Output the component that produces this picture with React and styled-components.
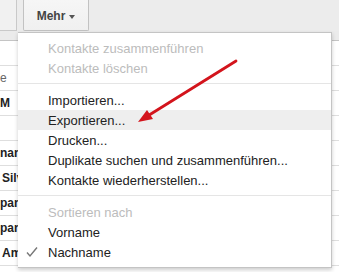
import React from 'react'
import styled, { createGlobalStyle } from 'styled-components'

const GlobalStyle = createGlobalStyle`
  html, body { margin: 0; padding: 0; background: #fff; }
  body { font-family: "Liberation Sans", Arial, sans-serif; }
`

const rows = [
  { text: '', bold: false },
  { text: 'e', bold: false },
  { text: 'M', bold: true },
  { text: '', bold: false },
  { text: 'nann', bold: true },
  { text: 'Silvia', bold: true, indent: true },
  { text: 'panagiotis', bold: true },
  { text: 'panagiotis', bold: true },
  { text: 'Amelie', bold: true, indent: true },
]

const menu = [
  { label: 'Kontakte zusammenführen', disabled: true },
  { label: 'Kontakte löschen', disabled: true },
  { sep: true },
  { label: 'Importieren...' },
  { label: 'Exportieren...', hover: true },
  { label: 'Drucken...' },
  { label: 'Duplikate suchen und zusammenführen...' },
  { label: 'Kontakte wiederherstellen...' },
  { sep: true },
  { label: 'Sortieren nach', disabled: true },
  { label: 'Vorname' },
  { label: 'Nachname', checked: true },
]

export default function App() {
  return (
    <>
      <GlobalStyle />
      <Page>
        <Toolbar>
          <SideButton />
          <MoreButton>
            Mehr
            <Caret />
          </MoreButton>
        </Toolbar>
        <HeaderBand />
        {rows.map((r, i) => (
          <Row key={i}>
            <Cell $bold={r.bold} $indent={r.indent}>{r.text}</Cell>
          </Row>
        ))}

        <Menu>
          {menu.map((m, i) =>
            m.sep ? (
              <Separator key={i} />
            ) : (
              <Item key={i} $disabled={m.disabled} $hover={m.hover}>
                <CheckSlot>
                  {m.checked && (
                    <svg width="12" height="12" viewBox="0 0 12 12">
                      <polyline points="1,6.5 4,10 11,1.5" fill="none" stroke="#777" strokeWidth="1.4" />
                    </svg>
                  )}
                </CheckSlot>
                {m.label}
              </Item>
            )
          )}
        </Menu>

        <Arrow width="339" height="272" viewBox="0 0 339 272">
          <line x1="236" y1="61" x2="146" y2="117" stroke="#d3141c" strokeWidth="2.8" strokeLinecap="round" />
          <polygon points="138,122 147,110 153,119" fill="#d3141c" />
        </Arrow>
      </Page>
    </>
  )
}

const Page = styled.div`
position:relative;
width:339px;
height:272px;
overflow:hidden;
background:#fff;
`

const Toolbar = styled.div`
display:flex;
gap:6px;
height:31px;
background:#ececec;
`

const SideButton = styled.div`
width:16px;
height:30px;
background:#f1f1f1;
border-right:1px solid #c9c9c9;
border-bottom:1px solid #c9c9c9;
`

const MoreButton = styled.div`
box-sizing:border-box;
width:66px;
height:31px;
display:flex;
align-items:center;
justify-content:center;
gap:4px;
padding-top:2px;
background:linear-gradient(#f6f6f6, #f0f0f0);
border:1px solid #c2c2c2;
border-top:none;
border-radius:0 0 2px 2px;
font-size:12px;
font-weight:bold;
color:#444;
`

const Caret = styled.span`
width:0;
height:0;
border-left:3.5px solid transparent;
border-right:3.5px solid transparent;
border-top:4px solid #555;
margin-top:1px;
`

const HeaderBand = styled.div`
height:9px;
background:#ebebeb;
border-bottom:1px solid #c4c4c4;
`

const Row = styled.div`
height:24px;
border-bottom:1px solid #dedede;
display:flex;
align-items:center;
`

const Cell = styled.span`
padding-left:${p => (p.$indent ? '2px' : '0')};
font-size:12px;
font-weight:${p => (p.$bold ? 'bold' : 'normal')};
color:${p => (p.$bold ? '#222' : '#666')};
white-space:nowrap;
`

const Menu = styled.div`
position:absolute;
left:18px;
top:32px;
width:314px;
height:236px;
box-sizing:border-box;
padding:5px 0 7px;
background:#fff;
border:1px solid #c4c4c4;
border-left:none;
box-shadow:0 2px 4px rgba(0,0,0,0.2);
`

const Item = styled.div`
height:20px;
display:flex;
align-items:center;
padding-left:8px;
font-size:13px;
color:${p => (p.$disabled ? '#bcbcbc' : '#222')};
background:${p => (p.$hover ? '#eeeeee' : 'transparent')};
white-space:nowrap;
`

const CheckSlot = styled.span`
width:22px;
display:flex;
align-items:center;
`

const Separator = styled.div`
height:1px;
margin:5px 0 6px;
background:#e5e5e5;
`

const Arrow = styled.svg`
position:absolute;
left:0;
top:0;
pointer-events:none;
`
